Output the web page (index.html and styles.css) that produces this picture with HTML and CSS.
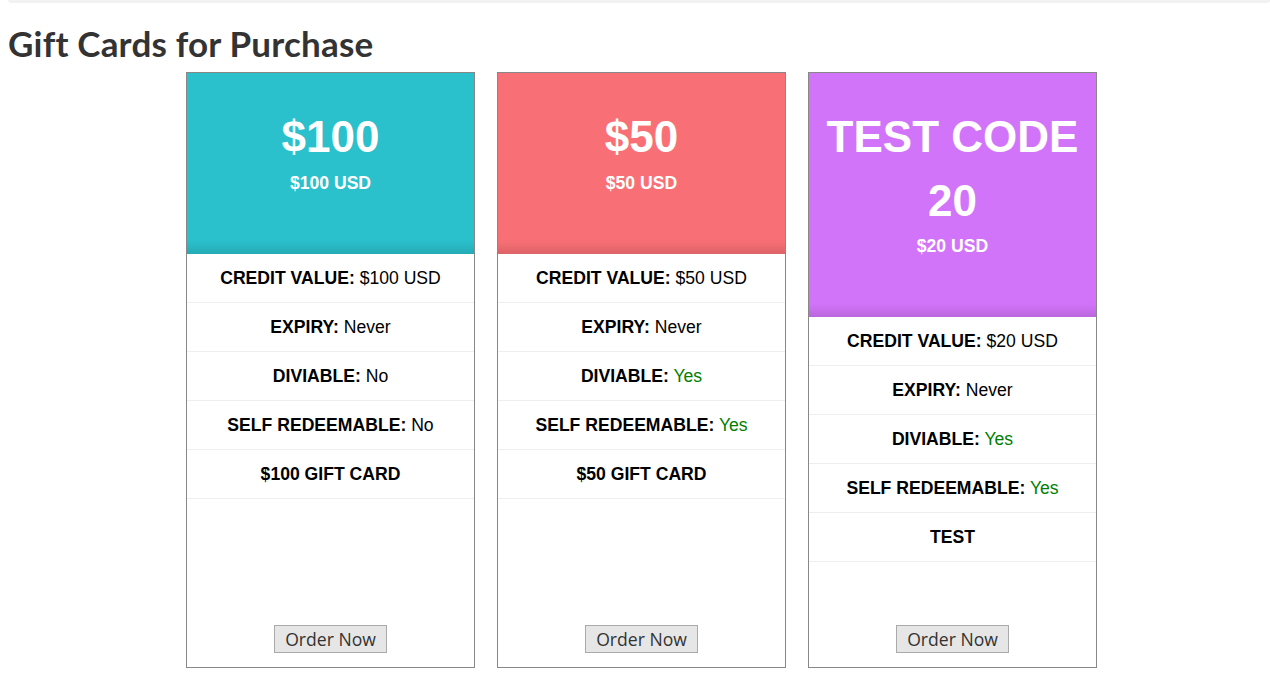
FILE: index.html
```html
<!DOCTYPE html>
<html>
<head>
<meta charset="utf-8">
<link rel="stylesheet" href="styles.css">
</head>
<body>
<div class="topbar"></div>
<h2 class="title">Gift Cards for Purchase</h2>
<div class="cards">
  <div class="card">
    <div class="head cyan">
      <div class="amount">$100</div>
      <div class="sub">$100 USD</div>
    </div>
    <ul class="rows">
      <li><b>CREDIT VALUE:</b> $100 USD</li>
      <li><b>EXPIRY:</b> Never</li>
      <li><b>DIVIABLE:</b> No</li>
      <li><b>SELF REDEEMABLE:</b> No</li>
      <li><b>$100 GIFT CARD</b></li>
    </ul>
    <div class="foot"><button class="btn">Order Now</button></div>
  </div>
  <div class="card">
    <div class="head red">
      <div class="amount">$50</div>
      <div class="sub">$50 USD</div>
    </div>
    <ul class="rows">
      <li><b>CREDIT VALUE:</b> $50 USD</li>
      <li><b>EXPIRY:</b> Never</li>
      <li><b>DIVIABLE:</b> <span class="yes">Yes</span></li>
      <li><b>SELF REDEEMABLE:</b> <span class="yes">Yes</span></li>
      <li><b>$50 GIFT CARD</b></li>
    </ul>
    <div class="foot"><button class="btn">Order Now</button></div>
  </div>
  <div class="card">
    <div class="head purple">
      <div class="amount">TEST CODE 20</div>
      <div class="sub">$20 USD</div>
    </div>
    <ul class="rows">
      <li><b>CREDIT VALUE:</b> $20 USD</li>
      <li><b>EXPIRY:</b> Never</li>
      <li><b>DIVIABLE:</b> <span class="yes">Yes</span></li>
      <li><b>SELF REDEEMABLE:</b> <span class="yes">Yes</span></li>
      <li><b>TEST</b></li>
    </ul>
    <div class="foot"><button class="btn">Order Now</button></div>
  </div>
</div>
</body>
</html>
```

FILE: styles.css
```css
html, body {
  margin: 0;
  padding: 0;
  background: #fff;
}
body {
  padding: 0 0 0 8px;
  font-family: "Liberation Sans", Arial, sans-serif;
}
.topbar {
  height: 3px;
  background: #f2f2f2;
  border-radius: 0 0 3px 3px;
}
.title {
  margin: 20px 0 0 0;
  font-family: Lato, "Open Sans", sans-serif;
  font-weight: 700;
  font-size: 35px;
  line-height: 40px;
  color: #333;
  letter-spacing: 0.2px;
}
.cards {
  display: flex;
  gap: 22px;
  margin: 9px 0 0 178px;
}
.card {
  width: 287px;
  height: 594px;
  border: 1px solid #888;
  display: flex;
  flex-direction: column;
}
.head {
  color: #fff;
  text-align: center;
  font-weight: 700;
  padding: 32px 10px 61px;
  box-shadow: inset 0 -14px 10px -8px rgba(0, 0, 0, 0.12);
}
.cyan { background: #2ac0cc; }
.red { background: #f87075; }
.purple { background: #d274f9; }
.amount {
  font-size: 44px;
  line-height: 63.5px;
}
.sub {
  font-size: 17.6px;
  line-height: 20px;
  margin-top: 4px;
}
.rows {
  list-style: none;
  margin: 0;
  padding: 0;
}
.rows li {
  text-align: center;
  font-size: 17.6px;
  line-height: 18px;
  padding: 15px 5px;
  border-bottom: 1px solid #eee;
  color: #000;
}
.yes {
  color: #008000;
}
.foot {
  margin-top: auto;
  text-align: center;
  padding-bottom: 14px;
}
.btn {
  font-family: "Open Sans", sans-serif;
  font-size: 17.6px;
  line-height: 24px;
  color: #333;
  background: #e6e6e6;
  border: 1px solid #aaa;
  border-radius: 0;
  padding: 1px 10px 1px;
}
```
